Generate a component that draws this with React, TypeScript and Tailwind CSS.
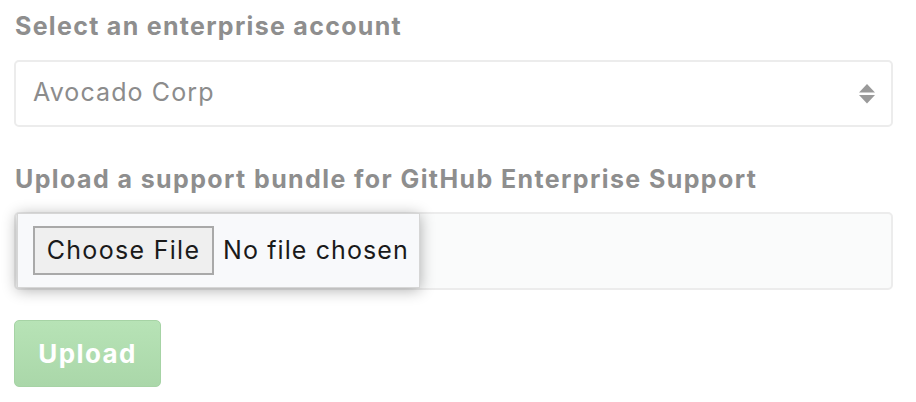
import React from 'react';

export default function App() {
  return (
    <div className="w-[916px] h-[402px] bg-white font-['Inter','Liberation_Sans',sans-serif] px-[14px] pt-[11px]">
      {/* Enterprise account */}
      <label className="block text-[25px] leading-[30px] font-bold tracking-[1.3px] text-[#8e8e8e] pl-[1px]">
        Select an enterprise account
      </label>
      <div className="mt-[19px] h-[67px] w-[879px] rounded-[5px] border-2 border-[#ececec] bg-white flex items-center justify-between pl-[17px] pr-[15px]">
        <span className="-mt-[2px] text-[25px] tracking-[1.1px] text-[#8c8c8c]">Avocado Corp</span>
        <svg width="18" height="22" viewBox="0 0 18 22">
          <path d="M9 1 L17 9.5 L1 9.5 Z" fill="#9a9a9a" />
          <path d="M1 12 L17 12 L9 20.5 Z" fill="#9a9a9a" />
        </svg>
      </div>

      {/* Support bundle */}
      <label className="mt-[37px] block text-[25px] leading-[30px] font-bold tracking-[1.4px] text-[#8e8e8e] pl-[1px]">
        Upload a support bundle for GitHub Enterprise Support
      </label>
      <div className="mt-[18px] h-[78px] w-[879px] rounded-[5px] border-2 border-[#ececec] bg-[#fafbfb] flex items-stretch">
        <div className="ml-[1px] -mt-[1px] w-[403px] bg-[#f8f9fb] border border-[#d6d6d6] shadow-[0_2px_14px_rgba(0,0,0,0.32)] flex items-center pl-[15px] gap-[9px]">
          <div className="h-[49px] w-[181px] bg-[#efefef] border-2 border-[#a9a9a9] flex items-center justify-center text-[25px] tracking-[1.3px] text-[#1a1a1a]">
            Choose File
          </div>
          <span className="text-[25px] tracking-[1.1px] text-[#1a1a1a]">No file chosen</span>
        </div>
      </div>

      {/* Upload button */}
      <button className="mt-[30px] h-[67px] w-[147px] rounded-[5px] border border-[#a6d3a5] bg-gradient-to-b from-[#b7e3b6] to-[#aad7a9] text-white text-[26px] tracking-[1.4px] font-bold">
        Upload
      </button>
    </div>
  );
}
